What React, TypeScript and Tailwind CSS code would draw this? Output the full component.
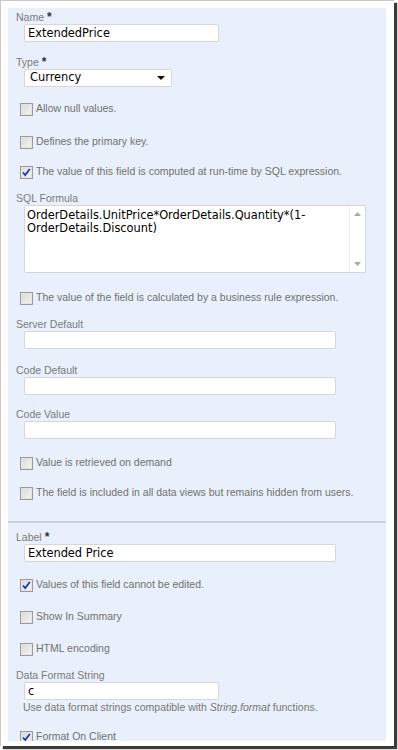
import React from 'react';

const labelFont = { fontFamily: '"Liberation Sans", Arial, sans-serif' };
const inputFont = { fontFamily: '"DejaVu Sans", Verdana, sans-serif' };

const Star = () => <span className="ml-[3px] text-[12px] font-bold text-[#333]">*</span>;

const Label = ({ text, req, mt }: { text: string; req?: boolean; mt: string }) => (
  <div className={`${mt} h-[14px] pl-[8px] text-[10.5px] leading-[14px] text-[#7a7a7a]`}>
    {text}
    {req && <Star />}
  </div>
);

const TextBox = ({ value, w }: { value?: string; w: string }) => (
  <div
    className={`${w} ml-[16px] h-[18px] rounded-[2px] border border-[#d6d6d6] bg-white pl-[3px] text-[11.4px] leading-[16px] text-black`}
    style={inputFont}
  >
    {value}
  </div>
);

const Box = ({ checked }: { checked?: boolean }) => (
  <svg width="13" height="13" viewBox="0 0 13 13" className="shrink-0">
    <defs>
      <linearGradient id="cbg" x1="0" y1="0" x2="1" y2="1">
        <stop offset="0" stopColor="#d8d8d8" />
        <stop offset="1" stopColor="#f6f6f6" />
      </linearGradient>
    </defs>
    <rect x="0.5" y="0.5" width="12" height="12" fill="url(#cbg)" stroke="#9a9a9a" />
    <rect x="1.5" y="1.5" width="10" height="10" fill="none" stroke="#e4e4e4" />
    {checked && <path d="M3 6.5 L5.2 9 L9.8 3" fill="none" stroke="#1c3aa8" strokeWidth="1.8" />}
  </svg>
);

const Check = ({ text, checked, mt }: { text: string; checked?: boolean; mt: string }) => (
  <div className={`${mt} flex h-[18px] items-center pl-[12px] text-[10.5px] text-[#707070]`}>
    <Box checked={checked} />
    <span className="ml-[3px] whitespace-nowrap">{text}</span>
  </div>
);

export default function App() {
  return (
    <div className="h-[750px] w-[398px] overflow-hidden bg-white">
      <div className="h-[746px] w-[394px] border-l border-t border-[#c8c8c8] bg-white pl-[7px] pt-[7px] shadow-[3px_3px_1px_#3a3a3a]">
        <div className="h-[733px] w-[378px] overflow-hidden bg-[#e9f0fb] pt-[2px]" style={labelFont}>
          <Label text="Name" req mt="mt-0" />
          <TextBox value="ExtendedPrice" w="w-[195px]" />
          <Label text="Type" req mt="mt-[13px]" />
          <div
            className="ml-[16px] flex h-[18px] w-[148px] items-center justify-between rounded-[2px] border border-[#d6d6d6] bg-white pl-[5px] pr-[6px] text-[11.4px] text-black"
            style={inputFont}
          >
            <span>Currency</span>
            <svg width="8" height="4" viewBox="0 0 8 4">
              <path d="M0 0 H8 L4 4 Z" fill="#111" />
            </svg>
          </div>
          <Check text="Allow null values." mt="mt-[13px]" />
          <Check text="Defines the primary key." mt="mt-[15px]" />
          <Check text="The value of this field is computed at run-time by SQL expression." checked mt="mt-[12px]" />
          <Label text="SQL Formula" mt="mt-[10px]" />
          <div className="ml-[16px] flex h-[68px] w-[342px] rounded-[2px] border border-[#d6d6d6] bg-white">
            <div className="flex-1 pl-[2px] pt-[3px] text-[11.4px] leading-[13px] text-black" style={inputFont}>
              OrderDetails.UnitPrice*OrderDetails.Quantity*(1-
              <br />
              OrderDetails.Discount)
            </div>
            <div className="flex w-[16px] flex-col items-center justify-between border-l border-[#ededed] py-[6px]">
              <svg width="7" height="4" viewBox="0 0 7 4">
                <path d="M0 4 L3.5 0 L7 4 Z" fill="#a8a8a8" />
              </svg>
              <svg width="7" height="4" viewBox="0 0 7 4">
                <path d="M0 0 H7 L3.5 4 Z" fill="#a8a8a8" />
              </svg>
            </div>
          </div>
          <Check text="The value of the field is calculated by a business rule expression." mt="mt-[16px]" />
          <Label text="Server Default" mt="mt-[10px]" />
          <TextBox w="w-[312px]" />
          <Label text="Code Default" mt="mt-[14px]" />
          <TextBox w="w-[312px]" />
          <Label text="Code Value" mt="mt-[12px]" />
          <TextBox w="w-[312px]" />
          <Check text="Value is retrieved on demand" mt="mt-[15px]" />
          <Check text="The field is included in all data views but remains hidden from users." mt="mt-[12px]" />
          <div className="mt-[19px] h-[2px] bg-[#cdd1d8]" />
          <Label text="Label" req mt="mt-[7px]" />
          <TextBox value="Extended Price" w="w-[312px]" />
          <Check text="Values of this field cannot be edited." checked mt="mt-[14px]" />
          <Check text="Show In Summary" mt="mt-[14px]" />
          <Check text="HTML encoding" mt="mt-[14px]" />
          <Label text="Data Format String" mt="mt-[10px]" />
          <TextBox value="c" w="w-[195px]" />
          <div className="h-[14px] pl-[15px] text-[10.5px] leading-[14px] text-[#777]">
            Use data format strings compatible with <i>String.format</i> functions.
          </div>
          <Check text="Format On Client" checked mt="mt-[14px]" />
        </div>
      </div>
    </div>
  );
}
